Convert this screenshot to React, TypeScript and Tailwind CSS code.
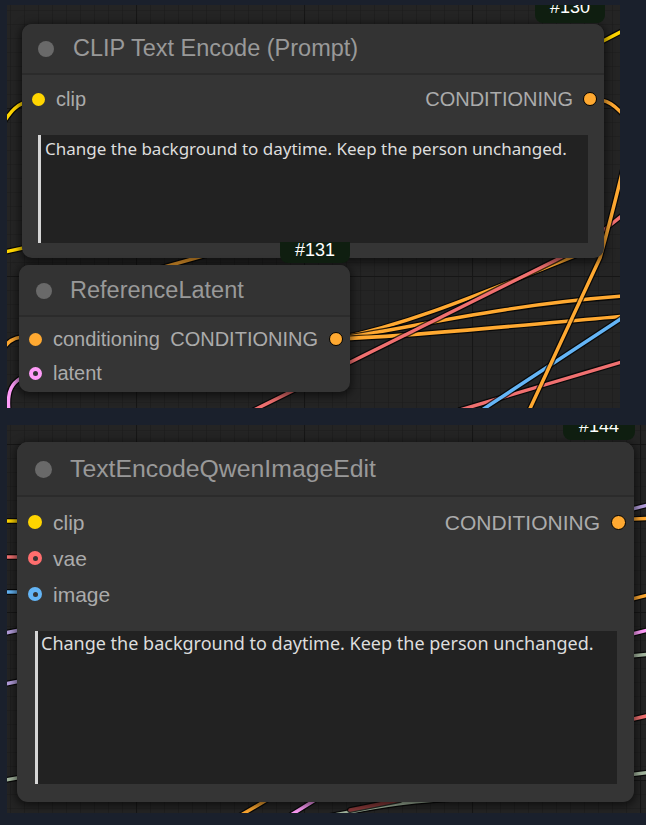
import React from "react";

const SANS = "font-['Liberation_Sans',Arial,sans-serif]";
const NOTO = "font-['Noto_Sans',sans-serif]";

function Wire({ d, c, w = 3.5 }: { d: string; c: string; w?: number }) {
  return (
    <g fill="none" strokeLinecap="round">
      <path d={d} stroke="#000" strokeOpacity={0.75} strokeWidth={w + 2.5} />
      <path d={d} stroke={c} strokeWidth={w} />
    </g>
  );
}

function Grid({ id }: { id: string }) {
  return (
    <>
      <defs>
        <pattern id={`${id}-m`} width="14" height="14" patternUnits="userSpaceOnUse" x="10" y="10">
          <path d="M14 0 L0 0 0 14" stroke="#1b1b1b" strokeWidth="1.2" fill="none" />
        </pattern>
        <pattern id={`${id}-M`} width="168" height="168" patternUnits="userSpaceOnUse" x="136" y="108">
          <path d="M168 0 L0 0 0 168" stroke="#161616" strokeWidth="2.2" fill="none" />
        </pattern>
      </defs>
      <rect x="-100" y="-100" width="2000" height="2000" fill={`url(#${id}-m)`} />
      <rect x="-100" y="-100" width="2000" height="2000" fill={`url(#${id}-M)`} />
    </>
  );
}

function InDot({ color, ring = false, size = 13 }: { color: string; ring?: boolean; size?: number }) {
  return (
    <span
      className="rounded-full flex items-center justify-center shrink-0"
      style={{ width: size, height: size, background: color }}
    >
      {ring && <span className="w-[5px] h-[5px] rounded-full bg-[#353535]" />}
    </span>
  );
}

function OutDot({ size = 14 }: { size?: number }) {
  return (
    <span
      className="rounded-full bg-[#FFA931] border-[1.5px] border-black shrink-0"
      style={{ width: size, height: size }}
    />
  );
}

function Badge({ text, cls }: { text: string; cls: string }) {
  return (
    <div
      className={`absolute bg-[#0f1e10] rounded-b-[8px] flex justify-center text-white text-[18px] leading-[16px] ${SANS} ${cls}`}
    >
      {text}
    </div>
  );
}

export default function App() {
  const txt = "Change the background to daytime. Keep the person unchanged.";
  return (
    <div className="w-[646px] h-[825px] bg-[#1a202c] flex flex-col pt-[5px] pl-[7px] gap-[17px] overflow-hidden">
      {/* Top canvas */}
      <div className="relative w-[613px] h-[403px] bg-[#242424] overflow-hidden shrink-0">
        <svg className="absolute inset-0" width="613" height="403" viewBox="7 5 613 403">
          <Grid id="g1" />
          <Wire d="M0 128 C10 112 16 102 38 99" c="#FFD500" />
          <Wire d="M0 253 L60 240" c="#FFD500" />
          <Wire d="M580 53 L630 27" c="#FFD500" />
          <Wire d="M590 99 C608 99 614 104 630 122" c="#FFA931" />
          <Wire d="M100 285 L260 240" c="#FFA931" />
          <Wire d="M336 339 C420 322 500 285 590 250" c="#FFA931" />
          <Wire d="M336 339 C400 330 500 305 625 296" c="#FFA931" />
          <Wire d="M336 339 C420 336 520 325 625 316" c="#FFA931" />
          <Wire d="M250 412 L556 260 Q590 243 625 213" c="#F07070" />
          <Wire d="M460 410 L625 361" c="#F07070" />
          <Wire d="M482 410 L625 316" c="#64B5F6" />
          <Wire d="M624 165 Q612 215 600 258 L527 415" c="#FFA931" />
          <Wire d="M4 348 Q12 334 36 337" c="#FFA931" />
          <Wire d="M9 412 C7 395 8 378 36 373" c="#FF9CF9" />
        </svg>

        {/* CLIP Text Encode */}
        <div className={`absolute left-[15px] top-[19px] w-[582px] h-[234px] rounded-[10px] bg-[#353535] shadow-[0_2px_8px_2px_rgba(0,0,0,0.55)] flex flex-col ${SANS}`}>
          <div className="h-[51px] flex items-center pl-[16px] pt-[1px] border-b-2 border-[#2b2b2b] bg-[#333333] rounded-t-[10px] shrink-0">
            <span className="w-[16px] h-[16px] rounded-full bg-[#696969]" />
            <span className="ml-[19px] text-[23.5px] leading-none text-[#999999]">CLIP Text Encode (Prompt)</span>
          </div>
          <div className="pt-[7px]">
            <div className="h-[34px] flex items-center justify-between pl-[10px] pr-[7px]">
              <div className="flex items-center gap-[11px]">
                <InDot color="#FFD500" />
                <span className="text-[20px] leading-none text-[#ababab]">clip</span>
              </div>
              <div className="flex items-center gap-[10px]">
                <span className="text-[20px] leading-none text-[#ababab]">CONDITIONING</span>
                <OutDot />
              </div>
            </div>
          </div>
          <div className={`mt-[19px] mx-[16px] h-[108px] border-l-[3px] border-[#d6d6d6] bg-[#222222] pl-[4px] pt-[2px] text-[17px] leading-[23px] text-[#dddddd] ${NOTO}`}>
            {txt}
          </div>
        </div>

        {/* ReferenceLatent */}
        <div className={`absolute left-[12px] top-[260px] w-[331px] h-[127px] rounded-[10px] bg-[#353535] shadow-[0_2px_8px_2px_rgba(0,0,0,0.55)] flex flex-col ${SANS}`}>
          <div className="h-[52px] flex items-center pl-[17px] pt-[1px] border-b-2 border-[#2b2b2b] bg-[#333333] rounded-t-[10px] shrink-0">
            <span className="w-[16px] h-[16px] rounded-full bg-[#696969]" />
            <span className="ml-[18px] text-[23.5px] leading-none text-[#999999]">ReferenceLatent</span>
          </div>
          <div className="pt-[5px] flex flex-col">
            <div className="h-[34px] flex items-center justify-between pl-[10px] pr-[7px]">
              <div className="flex items-center gap-[11px]">
                <InDot color="#FFA931" />
                <span className="text-[20px] leading-none text-[#ababab]">conditioning</span>
              </div>
              <div className="flex items-center gap-[11px]">
                <span className="text-[20px] leading-none text-[#ababab]">CONDITIONING</span>
                <OutDot />
              </div>
            </div>
            <div className="h-[34px] flex items-center pl-[10px]">
              <div className="flex items-center gap-[11px]">
                <InDot color="#FF9CF9" ring />
                <span className="text-[20px] leading-none text-[#ababab]">latent</span>
              </div>
            </div>
          </div>
        </div>

        <Badge text="#130" cls="left-[528px] top-[-6px] w-[70px] h-[24px]" />
        <Badge text="#131" cls="left-[273px] top-[237px] w-[70px] h-[21px]" />
      </div>

      {/* Bottom canvas */}
      <div className="relative w-[639px] h-[388px] bg-[#242424] overflow-hidden shrink-0">
        <svg className="absolute inset-0" width="639" height="388" viewBox="7 425 639 388">
          <Grid id="g2" />
          <Wire d="M0 521 L40 521" c="#FFD500" />
          <Wire d="M0 557 L40 557" c="#F07070" />
          <Wire d="M0 592 L40 592" c="#64B5F6" />
          <Wire d="M0 634 L40 626" c="#B39DDB" />
          <Wire d="M0 685 L40 677" c="#B39DDB" />
          <Wire d="M0 781 L40 774" c="#A3B59E" />
          <Wire d="M620 512 L660 502" c="#B39DDB" />
          <Wire d="M610 520 L660 518" c="#FFA931" />
          <Wire d="M620 602 L660 592" c="#FFA931" />
          <Wire d="M620 637 L660 627" c="#FF9CF9" />
          <Wire d="M620 657 L660 653" c="#A3B59E" />
          <Wire d="M620 722 L660 713" c="#F07070" />
          <Wire d="M620 776 L660 771" c="#A3B59E" />
          <Wire d="M236 818 L270 798" c="#FFA931" />
          <Wire d="M286 818 L320 797" c="#FF9CF9" />
          <Wire d="M320 818 C380 805 420 800 470 798" c="#A3B59E" />
          <Wire d="M350 810 L400 800" c="#8b3a3a" />
        </svg>

        {/* TextEncodeQwenImageEdit */}
        <div className={`absolute left-[10px] top-[17px] w-[617px] h-[360px] rounded-[11px] bg-[#353535] shadow-[0_2px_8px_2px_rgba(0,0,0,0.55)] flex flex-col ${SANS}`}>
          <div className="h-[55px] flex items-center pl-[18px] pt-[1px] border-b-2 border-[#2b2b2b] bg-[#333333] rounded-t-[11px] shrink-0">
            <span className="w-[17px] h-[17px] rounded-full bg-[#696969]" />
            <span className="ml-[18px] text-[24.8px] leading-none text-[#999999]">TextEncodeQwenImageEdit</span>
          </div>
          <div className="pt-[7px] flex flex-col">
            <div className="h-[36px] flex items-center justify-between pl-[11px] pr-[8px]">
              <div className="flex items-center gap-[11px]">
                <InDot color="#FFD500" size={14} />
                <span className="text-[21px] leading-none text-[#ababab]">clip</span>
              </div>
              <div className="flex items-center gap-[11px]">
                <span className="text-[21px] leading-none text-[#ababab]">CONDITIONING</span>
                <OutDot size={15} />
              </div>
            </div>
            <div className="h-[36px] flex items-center pl-[11px]">
              <div className="flex items-center gap-[11px]">
                <InDot color="#FF6E6E" ring size={14} />
                <span className="text-[21px] leading-none text-[#ababab]">vae</span>
              </div>
            </div>
            <div className="h-[36px] flex items-center pl-[11px]">
              <div className="flex items-center gap-[11px]">
                <InDot color="#64B5F6" ring size={14} />
                <span className="text-[21px] leading-none text-[#ababab]">image</span>
              </div>
            </div>
          </div>
          <div className={`mt-[19px] ml-[18px] mr-[17px] h-[153px] border-l-[3px] border-[#d6d6d6] bg-[#222222] pl-[3px] pt-[0px] text-[18px] leading-[25px] text-[#dddddd] ${NOTO}`}>
            {txt}
          </div>
        </div>

        <Badge text="#144" cls="left-[556px] top-[-7px] w-[72px] h-[22px]" />
      </div>
    </div>
  );
}
